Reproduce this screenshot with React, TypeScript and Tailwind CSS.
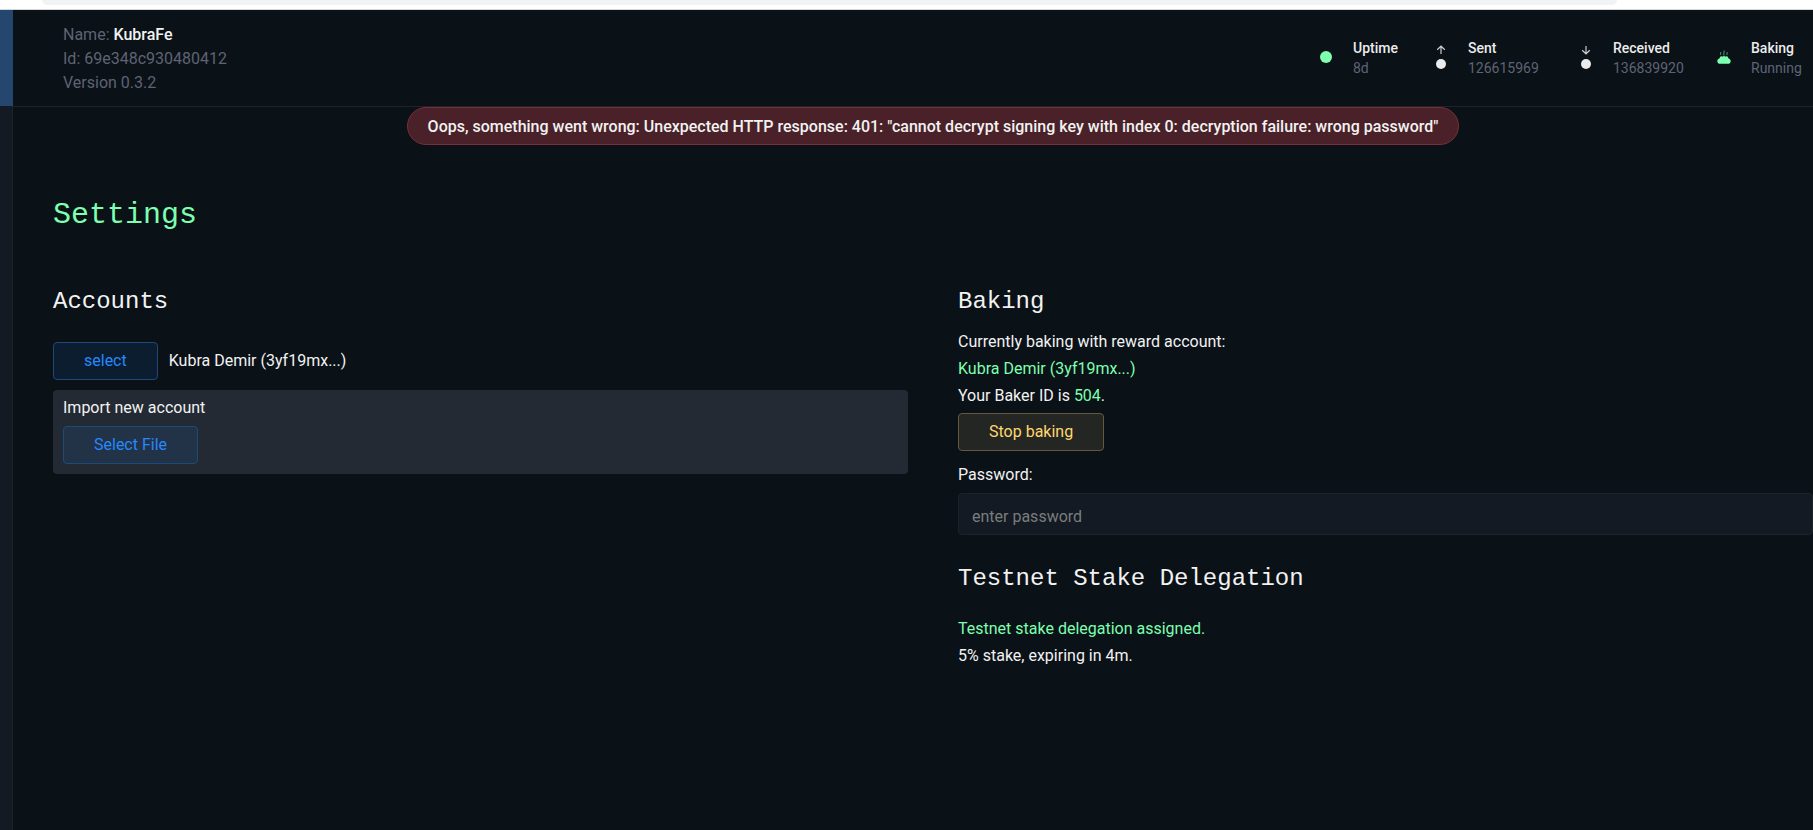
import type { ReactNode } from "react";

function Stat({
  icon,
  label,
  value,
  width,
}: {
  icon: ReactNode;
  label: string;
  value: string;
  width: string;
}) {
  return (
    <div className="flex items-center gap-5">
      <span className="flex w-3.5 flex-col items-center pb-0.5">{icon}</span>
      <dl className={`text-sm leading-5 ${width}`}>
        <dt className="font-medium text-[#ececec]">{label}</dt>
        <dd className="text-[#5f6375]">{value}</dd>
      </dl>
    </div>
  );
}

function Arrow({ down = false }: { down?: boolean }) {
  return (
    <svg
      viewBox="0 0 10 10"
      className="mb-1 size-2.5"
      fill="none"
      stroke="#c9cbcd"
      strokeWidth="1.2"
      aria-hidden="true"
    >
      {down ? <path d="M5 1v7.6M1.2 5.2 5 8.8l3.8-3.6" /> : <path d="M5 9V1.4M1.2 4.8 5 1.2l3.8 3.6" />}
    </svg>
  );
}

function BakingIcon() {
  return (
    <svg viewBox="0 0 14 14" className="size-3.5" aria-hidden="true">
      <path
        d="M3 13.8C1.4 13.8.3 12.700.3 11.200c0-1.300.9-2.300 2.100-2.600C2.700 7.200 3.500 6.300 4.500 6l.6 1.200L5.900 5.800h.6l.5 1.300.5-1.300h.6l.8 1.400.6-1.200c1 .3 1.800 1.200 2.100 2.600 1.200.3 2.100 1.300 2.100 2.600 0 1.500-1.100 2.600-2.700 2.600z"
        fill="#7dffaf"
      />
      <path
        d="M3.800 5c-.9-1 .5-1.700-.2-3M7 5c-.9-1.500.7-2.700 0-4.500M10.200 5c-.9-1 .5-1.700-.2-3"
        fill="none"
        stroke="#4fa87b"
        strokeWidth="1"
      />
    </svg>
  );
}

const heading = "font-['Liberation_Mono',monospace] text-2xl leading-8 text-[#f2f2f2]";
const blueButton =
  "h-[38px] rounded border border-[#1d4a7a] bg-[#1a8cff]/10 px-[30px] text-[#2589ff]";

export default function App() {
  return (
    <div className="flex min-h-screen flex-col bg-[#0a1117] font-['Roboto',sans-serif] text-base text-[#f2f2f2]">
      <div className="h-2.5 border-b border-[#d5d8dc] bg-white pr-[196px] pl-[42px]">
        <div className="h-[5px] rounded-b-xl bg-[#f1f3f4]" />
      </div>

      <div className="flex grow">
        <aside className="w-[13px] shrink-0 border-r border-[#1c2329] bg-[#131a23]">
          <div className="-mr-px h-24 bg-[#25466f]" />
        </aside>

        <div className="flex min-w-0 grow flex-col">
          <header className="flex items-start justify-between border-b border-[#1c2329] pr-2.5 pl-[50px]">
            <div className="pt-[13px] pb-[11px] leading-6 text-[#5f6375]">
              <p>
                Name: <span className="font-medium text-[#f2f2f2]">KubraFe</span>
              </p>
              <p>Id: 69e348c930480412</p>
              <p>Version 0.3.2</p>
            </div>
            <div className="flex gap-[30px] pt-7">
              <Stat
                icon={<span className="size-3 rounded-full bg-[#7dffaf]" />}
                label="Uptime"
                value="8d"
                width="w-[51px]"
              />
              <Stat
                icon={
                  <>
                    <Arrow />
                    <span className="size-2.5 rounded-full bg-[#ececec]" />
                  </>
                }
                label="Sent"
                value="126615969"
                width="w-[81px]"
              />
              <Stat
                icon={
                  <>
                    <Arrow down />
                    <span className="size-2.5 rounded-full bg-[#ececec]" />
                  </>
                }
                label="Received"
                value="136839920"
                width="w-[74px]"
              />
              <Stat icon={<BakingIcon />} label="Baking" value="Running" width="w-[52px]" />
            </div>
          </header>

          <main className="pl-10">
            <div
              role="alert"
              className="mx-auto flex h-[38px] w-fit items-center rounded-full border border-[#762f3b] bg-[#4a2128] px-5 pt-0.5 font-medium"
            >
              Oops, something went wrong: Unexpected HTTP response: 401: "cannot decrypt signing key
              with index 0: decryption failure: wrong password"
            </div>

            <h1 className="mt-[50px] font-['Liberation_Mono',monospace] text-3xl leading-10 text-[#7dffaf]">
              Settings
            </h1>

            <div className="mt-[51px] grid grid-cols-2 gap-[50px]">
              <section>
                <h2 className={heading}>Accounts</h2>
                <div className="mt-6 flex items-center gap-[11px]">
                  <button type="button" className={blueButton}>
                    select
                  </button>
                  <span>Kubra Demir (3yf19mx...)</span>
                </div>
                <div className="mt-2.5 rounded bg-[#232a33] px-2.5 pt-1.5 pb-2.5">
                  <p className="mb-1.5">Import new account</p>
                  <button type="button" className={blueButton}>
                    Select File
                  </button>
                </div>
              </section>

              <section>
                <h2 className={heading}>Baking</h2>
                <div className="mt-2.5 leading-[27px]">
                  <p>Currently baking with reward account:</p>
                  <p className="text-[#7dffaf]">Kubra Demir (3yf19mx...)</p>
                  <p>
                    Your Baker ID is <span className="text-[#7dffaf]">504</span>.
                  </p>
                </div>
                <button
                  type="button"
                  className="mt-1 h-[38px] rounded border border-[#64593a] bg-[#242623] px-[30px] text-[#ffd76e]"
                >
                  Stop baking
                </button>
                <label htmlFor="password" className="mt-3 block">
                  Password:
                </label>
                <input
                  id="password"
                  type="password"
                  placeholder="enter password"
                  className="mt-1.5 block h-[42px] w-full rounded-sm border border-[#1c2329] bg-[#131a23] px-[13px] pt-1 placeholder:text-[#7b7d7c]"
                />
                <h2 className={`mt-7 ${heading}`}>Testnet Stake Delegation</h2>
                <div className="mt-5 leading-[27px]">
                  <p className="text-[#7dffaf]">Testnet stake delegation assigned.</p>
                  <p>5% stake, expiring in 4m.</p>
                </div>
              </section>
            </div>
          </main>
        </div>
      </div>
    </div>
  );
}
